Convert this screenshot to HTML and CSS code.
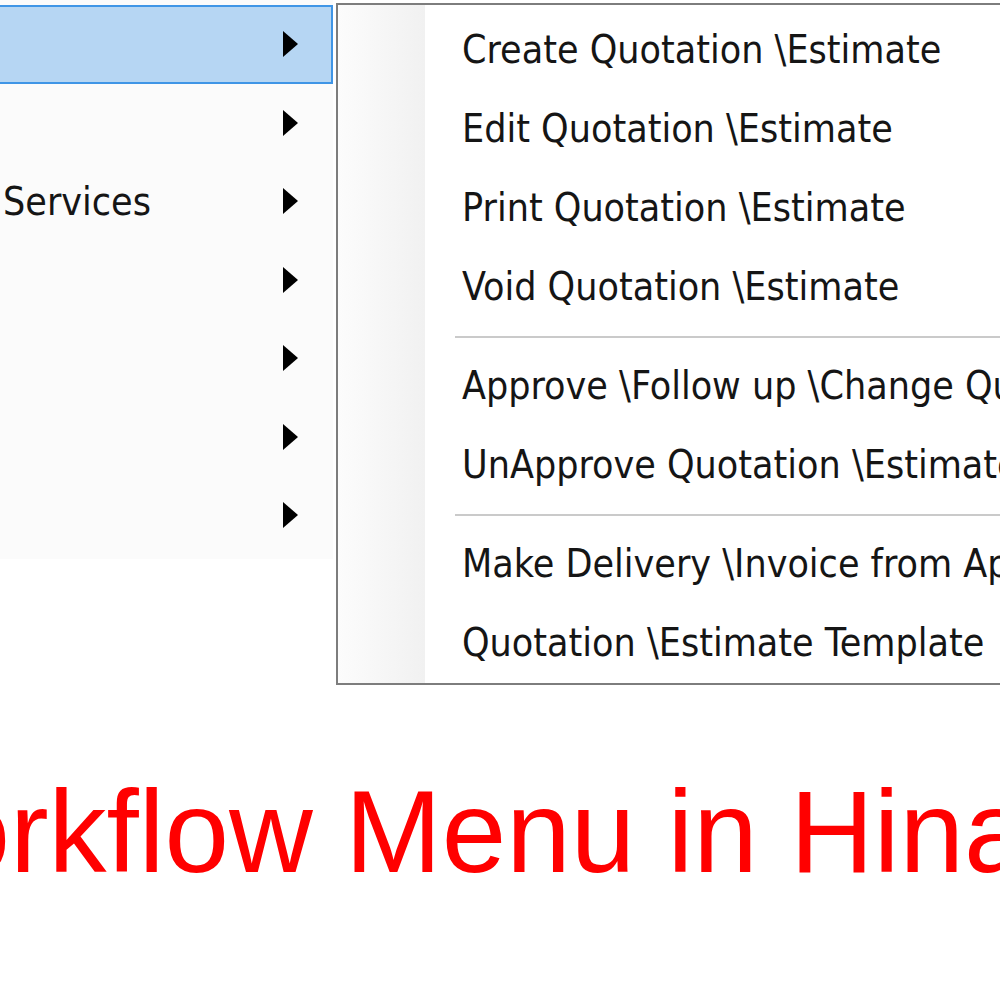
FILE: index.html
```html
<!DOCTYPE html>
<html>
<head>
  <title>Workflow Menu</title>
  <link rel="stylesheet" href="styles.css">
</head>
<body>
  <div class="screen">
    <div class="main-menu">
      <div class="menu-row active"><span class="label"></span><span class="arrow"></span></div>
      <div class="menu-row"><span class="label"></span><span class="arrow"></span></div>
      <div class="menu-row"><span class="label">Services</span><span class="arrow"></span></div>
      <div class="menu-row"><span class="label"></span><span class="arrow"></span></div>
      <div class="menu-row"><span class="label"></span><span class="arrow"></span></div>
      <div class="menu-row"><span class="label"></span><span class="arrow"></span></div>
      <div class="menu-row"><span class="label"></span><span class="arrow"></span></div>
    </div>

    <div class="sub-menu">
      <div class="sub-item">Create Quotation \Estimate</div>
      <div class="sub-item">Edit Quotation \Estimate</div>
      <div class="sub-item">Print Quotation \Estimate</div>
      <div class="sub-item">Void Quotation \Estimate</div>
      <div class="separator"></div>
      <div class="sub-item">Approve \Follow up \Change Quotation \Estimate Status</div>
      <div class="sub-item">UnApprove Quotation \Estimate</div>
      <div class="separator"></div>
      <div class="sub-item">Make Delivery \Invoice from Approved Quotation</div>
      <div class="sub-item">Quotation \Estimate Template</div>
    </div>
  </div>

  <div class="caption">Workflow Menu in Hinawi Software</div>
</body>
</html>
```

FILE: styles.css
```css
html, body {
  margin: 0;
  padding: 0;
  background: #ffffff;
}

body {
  width: 1000px;
  height: 1000px;
  overflow: hidden;
  font-family: "DejaVu Sans Condensed", "DejaVu Sans", sans-serif;
  font-stretch: condensed;
  color: #151515;
}

.screen {
  display: flex;
  align-items: flex-start;
  height: 685px;
}

/* left (parent) menu */
.main-menu {
  width: 333px;
  flex-shrink: 0;
  padding: 5px 0 4px 0;
  background: #fbfbfb;
}

.menu-row {
  display: flex;
  align-items: center;
  justify-content: space-between;
  height: 78.5px;
  box-sizing: border-box;
  font-size: 39px;
}

.menu-row .label {
  padding-left: 3px;
}

.menu-row.active {
  background: #b6d6f3;
  border: 2px solid #3f95e6;
  border-left: none;
}

.arrow {
  width: 0;
  height: 0;
  border-top: 13px solid transparent;
  border-bottom: 13px solid transparent;
  border-left: 15px solid #000000;
  margin-right: 35px;
}

.menu-row.active .arrow {
  margin-right: 33px;
}

/* sub menu */
.sub-menu {
  flex-shrink: 0;
  width: 760px;
  margin-left: 3px;
  margin-top: 3px;
  padding: 5px 0 1px 0;
  border: 2px solid #7d7d7d;
  border-right: none;
  background: linear-gradient(to right, #fcfcfc 0, #f1f1f1 87px, #ffffff 87px);
}

.sub-item {
  height: 79px;
  line-height: 79px;
  padding-left: 124px;
  font-size: 39px;
  white-space: nowrap;
}

.separator {
  height: 2px;
  margin: 10px 0 8px 117px;
  background: #cacaca;
}

/* caption */
.caption {
  margin-top: 89px;
  margin-left: -162px;
  font-family: "Liberation Sans", Arial, sans-serif;
  font-size: 116px;
  line-height: 1;
  color: #ff0000;
  white-space: nowrap;
}
```
